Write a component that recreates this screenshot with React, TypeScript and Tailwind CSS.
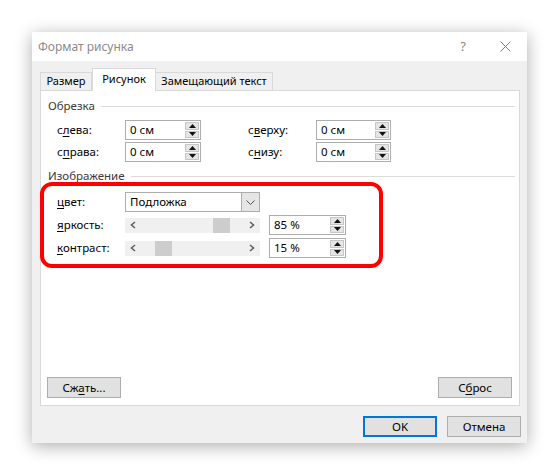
import React from 'react'

const font = { fontFamily: '"Noto Sans", "Open Sans", sans-serif' }

function Acc({ pre, key1, post }: { pre: string; key1: string; post: string }) {
  return (
    <span>
      {pre}
      <span className="underline underline-offset-2">{key1}</span>
      {post}
    </span>
  )
}

function Spinner() {
  return (
    <div className="flex flex-col w-[15px] h-full py-[1px] pr-[1px] gap-[1px]">
      <div className="flex-1 bg-[#e5e5e5] border border-[#c6c6c6] flex items-center justify-center">
        <svg width="7" height="4" viewBox="0 0 7 4">
          <polygon points="0,4 7,4 3.5,0" fill="#111" />
        </svg>
      </div>
      <div className="flex-1 bg-[#e5e5e5] border border-[#c6c6c6] flex items-center justify-center">
        <svg width="7" height="4" viewBox="0 0 7 4">
          <polygon points="0,0 7,0 3.5,4" fill="#111" />
        </svg>
      </div>
    </div>
  )
}

function SpinInput({ value, w }: { value: string; w: string }) {
  return (
    <div className={`${w} h-[20px] border border-[#adadad] bg-white flex items-stretch`}>
      <div className="flex-1 pl-[4px] flex items-center text-[11.5px] text-black">{value}</div>
      <Spinner />
    </div>
  )
}

function Slider({ from, to }: { from: number; to: number }) {
  return (
    <div className="w-[135px] h-[15px] bg-[#f0f0f0] relative flex items-center justify-between px-[5px]">
      <svg width="6" height="8" viewBox="0 0 6 8">
        <polyline points="5,1 1.5,4 5,7" fill="none" stroke="#606060" strokeWidth="1.6" />
      </svg>
      <div
        className="absolute top-0 h-full bg-[#cdcdcd]"
        style={{ left: from, width: to - from }}
      />
      <svg width="6" height="8" viewBox="0 0 6 8">
        <polyline points="1,1 4.5,4 1,7" fill="none" stroke="#606060" strokeWidth="1.6" />
      </svg>
    </div>
  )
}

function Button({ children, primary }: { children: React.ReactNode; primary?: boolean }) {
  return (
    <div
      className={`w-[74px] h-[21px] flex items-center justify-center bg-[#e1e1e1] text-[11.5px] text-black ${
        primary ? 'border-2 border-[#0078d7]' : 'border border-[#adadad]'
      }`}
    >
      {children}
    </div>
  )
}

function GroupHeader({ title }: { title: string }) {
  return (
    <div className="flex items-center h-[16px] pl-[7px] pr-[4px] gap-[6px]">
      <span className="text-[11.5px] text-[#3a3a3a]">{title}</span>
      <div className="flex-1 h-px bg-[#dcdcdc]" />
    </div>
  )
}

export default function App() {
  return (
    <div className="w-[559px] h-[476px] bg-white pt-[32px] pl-[32px]" style={font}>
      <div className="w-[495px] h-[411px] flex flex-col shadow-[0_3px_16px_rgba(0,0,0,0.33)]">
        {/* Title bar */}
        <div className="h-[29px] bg-white flex items-center pl-[6px] pr-[16px]">
          <span className="text-[12px] text-[#8a8a8a] flex-1">Формат рисунка</span>
          <span className="text-[13px] text-[#8a8a8a] mr-[34px]">?</span>
          <svg width="11" height="11" viewBox="0 0 11 11">
            <path d="M0.5 0.5 L10.5 10.5 M10.5 0.5 L0.5 10.5" stroke="#7a7a7a" strokeWidth="1" />
          </svg>
        </div>

        {/* Body */}
        <div className="flex-1 bg-[#f0f0f0] pl-[8px] pr-[7px] flex flex-col">
          {/* Tabs */}
          <div className="mt-[7px] h-[22px] flex items-end relative z-10 text-[11px] text-black">
            <div className="w-[52px] h-[18px] border border-b-0 border-[#d9d9d9] flex items-center justify-center">
              Размер
            </div>
            <div className="w-[64px] h-[23px] -mb-px border border-b-0 border-[#d9d9d9] bg-white flex items-center justify-center pb-[2px]">
              Рисунок
            </div>
            <div className="w-[117px] h-[18px] border border-b-0 border-l-0 border-[#d9d9d9] flex items-center justify-center">
              Замещающий текст
            </div>
          </div>

          {/* Panel */}
          <div className="h-[316px] border border-[#d9d9d9] bg-white relative flex flex-col pt-[7px] pb-[7px]">
            <GroupHeader title="Обрезка" />

            <div className="mt-[6px] flex items-center pl-[16px] h-[20px] text-[11.5px] text-black">
              <div className="w-[68px]"><Acc pre="с" key1="л" post="ева:" /></div>
              <SpinInput value="0 см" w="w-[76px]" />
              <div className="w-[47px]" />
              <div className="w-[68px]"><Acc pre="с" key1="в" post="ерху:" /></div>
              <SpinInput value="0 см" w="w-[75px]" />
            </div>
            <div className="mt-[2px] flex items-center pl-[16px] h-[20px] text-[11.5px] text-black">
              <div className="w-[68px]"><Acc pre="с" key1="п" post="рава:" /></div>
              <SpinInput value="0 см" w="w-[76px]" />
              <div className="w-[47px]" />
              <div className="w-[68px]"><Acc pre="с" key1="н" post="изу:" /></div>
              <SpinInput value="0 см" w="w-[75px]" />
            </div>

            <div className="mt-[6px]">
              <GroupHeader title="Изображение" />
            </div>

            <div className="mt-[8px] flex items-center pl-[16px] h-[20px] text-[11.5px] text-black">
              <div className="w-[68px]"><Acc pre="" key1="ц" post="вет:" /></div>
              <div className="w-[135px] h-[20px] border border-[#adadad] bg-white flex items-stretch">
                <div className="flex-1 pl-[4px] flex items-center">Подложка</div>
                <div className="w-[18px] bg-[#e5e5e5] border-l border-[#adadad] flex items-center justify-center">
                  <svg width="9" height="5" viewBox="0 0 9 5">
                    <polyline points="0.5,0.5 4.5,4.5 8.5,0.5" fill="none" stroke="#555" strokeWidth="1" />
                  </svg>
                </div>
              </div>
            </div>

            <div className="mt-[3px] flex items-center pl-[16px] h-[20px] text-[11.5px] text-black">
              <div className="w-[68px]"><Acc pre="" key1="я" post="ркость:" /></div>
              <Slider from={88} to={105} />
              <div className="w-[9px]" />
              <SpinInput value="85 %" w="w-[77px]" />
            </div>
            <div className="mt-[3px] flex items-center pl-[16px] h-[20px] text-[11.5px] text-black">
              <div className="w-[68px]"><Acc pre="" key1="к" post="онтраст:" /></div>
              <Slider from={30} to={47} />
              <div className="w-[9px]" />
              <SpinInput value="15 %" w="w-[77px]" />
            </div>

            <div className="flex-1" />

            <div className="flex items-center justify-between pl-[6px] pr-[7px]">
              <Button><Acc pre="Сж" key1="а" post="ть..." /></Button>
              <Button><Acc pre="С" key1="б" post="рос" /></Button>
            </div>

            {/* annotation */}
            <div className="absolute left-[-1px] top-[91px] w-[343px] h-[86px] border-[4px] border-[#ff0000] rounded-[12px]" />
          </div>

          {/* Dialog buttons */}
          <div className="mt-[10px] flex justify-end gap-[10px] mr-[-1px]">
            <Button primary>OK</Button>
            <Button>Отмена</Button>
          </div>
        </div>
      </div>
    </div>
  )
}
